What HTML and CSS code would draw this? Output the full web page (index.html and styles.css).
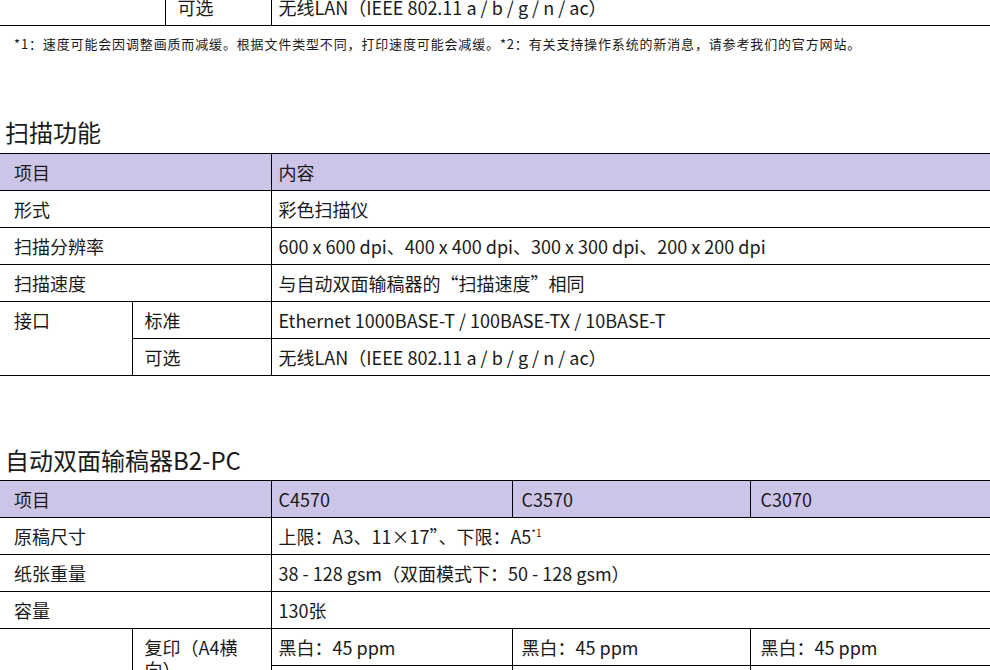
FILE: index.html
```html
<!DOCTYPE html>
<html lang="zh-CN">
<head>
<meta charset="utf-8">
<link rel="stylesheet" href="styles.css">
</head>
<body>
<div class="page">
  <table class="spec spec-prev">
    <colgroup><col class="c-prev1"><col class="c-prev2"><col></colgroup>
    <tr><td class="blank"></td><td class="sub">可选</td><td>无线LAN（IEEE 802.11 a / b / g / n / ac）</td></tr>
  </table>
  <p class="note">*1：速度可能会因调整画质而减缓。根据文件类型不同，打印速度可能会减缓。*2：有关支持操作系统的新消息，请参考我们的官方网站。</p>

  <h2 class="title title-scan">扫描功能</h2>
  <table class="spec">
    <colgroup><col class="c1"><col class="c2"><col></colgroup>
    <tr class="head"><td colspan="2" class="first">项目</td><td>内容</td></tr>
    <tr><td colspan="2" class="first">形式</td><td>彩色扫描仪</td></tr>
    <tr><td colspan="2" class="first">扫描分辨率</td><td>600 x 600 dpi、400 x 400 dpi、300 x 300 dpi、200 x 200 dpi</td></tr>
    <tr><td colspan="2" class="first">扫描速度</td><td>与自动双面输稿器的“扫描速度”相同</td></tr>
    <tr><td rowspan="2" class="first top">接口</td><td class="sub">标准</td><td>Ethernet 1000BASE-T / 100BASE-TX / 10BASE-T</td></tr>
    <tr><td class="sub">可选</td><td>无线LAN（IEEE 802.11 a / b / g / n / ac）</td></tr>
  </table>

  <h2 class="title title-adf">自动双面输稿器B2-PC</h2>
  <table class="spec">
    <colgroup><col class="c1"><col class="c2"><col class="m1"><col class="m2"><col></colgroup>
    <tr class="head"><td colspan="2" class="first">项目</td><td>C4570</td><td class="p2">C3570</td><td class="p3">C3070</td></tr>
    <tr><td colspan="2" class="first">原稿尺寸</td><td colspan="3">上限：A3、11×17”、下限：A5<sup>*1</sup></td></tr>
    <tr><td colspan="2" class="first">纸张重量</td><td colspan="3">38 - 128 gsm（双面模式下：50 - 128 gsm）</td></tr>
    <tr><td colspan="2" class="first">容量</td><td colspan="3">130张</td></tr>
    <tr><td rowspan="2" class="first"></td><td rowspan="2" class="sub top">复印（A4横向）</td><td>黑白：45 ppm</td><td class="p2">黑白：45 ppm</td><td class="p3">黑白：45 ppm</td></tr>
    <tr><td>彩色：45 ppm</td><td class="p2">彩色：35 ppm</td><td class="p3">彩色：30 ppm</td></tr>
  </table>
</div>
</body>
</html>
```
FILE: styles.css
```css
html, body {
  margin: 0;
  padding: 0;
  background: #ffffff;
}
body {
  font-family: "Noto Sans CJK SC", "Noto Sans", sans-serif;
  color: #1a1a1a;
  overflow: hidden;
}
.page {
  width: 990px;
  margin-top: -11px;
}
.spec {
  width: 990px;
  border-collapse: collapse;
  table-layout: fixed;
  font-size: 18px;
}
.spec td {
  border-top: 1px solid #000;
  border-bottom: 1px solid #000;
  border-left: 1px solid #000;
  height: 36px;
  padding: 0 7px;
  line-height: 22px;
  vertical-align: middle;
}
.spec td.first {
  border-left: none;
  padding-left: 14px;
}
.spec td.sub {
  padding-left: 12px;
  padding-right: 10px;
}
.spec td.top {
  vertical-align: top;
  padding-top: 7px;
}
.spec td.p2 { padding-left: 9px; }
.spec td.p3 { padding-left: 10px; }
.spec .head td {
  background: #cdc5e8;
}
.c1 { width: 132px; }
.c2 { width: 139px; }
.m1 { width: 241px; }
.m2 { width: 238px; }
.c-prev1 { width: 165px; }
.c-prev2 { width: 106px; }
.spec-prev td.blank {
  border-top: none;
  border-left: none;
}
.spec-prev td { border-top: none; }
sup {
  font-size: 10px;
  vertical-align: 7px;
  line-height: 0;
}
.note {
  margin: 10px 0 0 14px;
  font-size: 13px;
  line-height: 16px;
  letter-spacing: 0.85px;
}
.title {
  font-size: 24px;
  font-weight: 400;
  margin: 0;
  padding-left: 5px;
  line-height: 32px;
}
.title-scan { margin-top: 64px; margin-bottom: 5px; }
.title-adf { margin-top: 68px; margin-bottom: 4px; }
```
